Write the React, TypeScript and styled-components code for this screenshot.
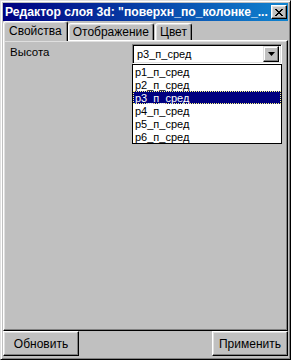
import React from 'react';
import styled, { createGlobalStyle } from 'styled-components';

const Global = createGlobalStyle`
  html, body { margin: 0; padding: 0; background: #c0c0c0; }
  body { font-family: "Liberation Sans", Arial, sans-serif; font-size: 11px; color: #000; }
  #root { width: 291px; height: 360px; }
  * { box-sizing: border-box; }
`;

const Window = styled.div`
  width: 291px;
  height: 360px;
  background: #c0c0c0;
  border: 1px solid;
  border-color: #dfdfdf #000 #000 #dfdfdf;
  box-shadow: inset 1px 1px #fff, inset -1px -1px #808080;
  padding: 2px 2px 3px 2px;
  display: flex;
  flex-direction: column;
`;

const TitleBar = styled.div`
  height: 18px;
  flex: none;
  background: linear-gradient(90deg, #000080, #1084d0);
  color: #fff;
  display: flex;
  align-items: center;
  justify-content: space-between;
  padding: 0 1px 0 2px;
  font-weight: bold;
  font-size: 12.2px;
  white-space: nowrap;
`;

const TitleText = styled.span`
  overflow: hidden;
`;

const CloseButton = styled.div`
  width: 16px;
  height: 14px;
  flex: none;
  background: #c0c0c0;
  border: 1px solid;
  border-color: #fff #000 #000 #fff;
  box-shadow: inset -1px -1px #808080, inset 1px 1px #dfdfdf;
  display: flex;
  align-items: center;
  justify-content: center;
`;

const TabStrip = styled.div`
  height: 19px;
  flex: none;
  display: flex;
  align-items: flex-end;
  position: relative;
  z-index: 1;
`;

const Tab = styled.div<{ $active?: boolean }>`
  height: ${p => (p.$active ? 20 : 17)}px;
  padding: 0 ${p => (p.$active ? 5 : 4)}px;
  margin: 0 ${p => (p.$active ? 0 : 1)}px ${p => (p.$active ? -1 : 0)}px 0;
  border: 1px solid;
  border-bottom: none;
  border-color: #fff #000 transparent #fff;
  border-radius: 3px 3px 0 0;
  box-shadow: inset -1px 0 #808080, inset 1px 1px #dfdfdf;
  background: #c0c0c0;
  display: flex;
  align-items: center;
  padding-bottom: ${p => (p.$active ? 2 : 0)}px;
  position: relative;
  z-index: ${p => (p.$active ? 2 : 1)};
  font-size: 12px;
`;

const Panel = styled.div`
  flex: 1;
  border: 1px solid;
  border-color: #fff #000 #000 #fff;
  box-shadow: inset -1px -1px #808080, inset 1px 1px #dfdfdf;
  padding: 3px 5px 0 6px;
  display: flex;
  flex-direction: column;
`;

const FieldRow = styled.div`
  display: flex;
  justify-content: space-between;
  align-items: flex-start;
`;

const Label = styled.span`
  margin-top: 2px;
  font-size: 11.5px;
`;

const Combo = styled.div`
  position: relative;
  width: 150px;
  height: 20px;
  background: #fff;
  border: 1px solid;
  border-color: #808080 #fff #fff #808080;
  box-shadow: inset 1px 1px #000, inset -1px -1px #dfdfdf;
  display: flex;
  align-items: center;
  justify-content: space-between;
  padding: 0 2px 0 4px;
`;

const ComboValue = styled.span`
  font-size: 11px;
`;

const DropButton = styled.div`
  width: 16px;
  height: 16px;
  background: #c0c0c0;
  border: 1px solid;
  border-color: #dfdfdf #000 #000 #dfdfdf;
  box-shadow: inset -1px -1px #808080, inset 1px 1px #fff;
  display: flex;
  align-items: center;
  justify-content: center;
`;

const DropList = styled.div`
  position: absolute;
  top: 19px;
  left: -1px;
  width: 150px;
  background: #fff;
  border: 1px solid #000;
  z-index: 5;
`;

const Item = styled.div<{ $selected?: boolean }>`
  height: 13px;
  line-height: 12px;
  padding-left: 1px;
  font-size: 11px;
  color: ${p => (p.$selected ? '#fff' : '#000')};
  background: ${p => (p.$selected ? '#000080' : '#fff')};
  border: 1px dotted ${p => (p.$selected ? '#ffff80' : 'transparent')};
`;

const ButtonRow = styled.div`
  height: 25px;
  flex: none;
  display: flex;
  justify-content: space-between;
`;

const Button = styled.div`
  width: 76px;
  height: 25px;
  background: #c0c0c0;
  border: 1px solid;
  border-color: #fff #000 #000 #fff;
  box-shadow: inset -1px -1px #808080, inset 1px 1px #dfdfdf;
  display: flex;
  align-items: center;
  justify-content: center;
  font-size: 12px;
`;

const items = ['p1_п_сред', 'p2_п_сред', 'p3_п_сред', 'p4_п_сред', 'p5_п_сред', 'p6_п_сред'];

export default function App() {
  return (
    <>
      <Global />
      <Window>
        <TitleBar>
          <TitleText>Редактор слоя 3d: "поверхн_по_колонке_...</TitleText>
          <CloseButton>
            <svg width="8" height="7" viewBox="0 0 8 7">
              <path d="M0 0h2v1h1v1h2v-1h1v-1h2v1h-1v1h-1v1h-1v1h1v1h1v1h1v1h-2v-1h-1v-1h-2v1h-1v1h-2v-1h1v-1h1v-1h1v-1h-1v-1h-1v-1h-1z" fill="#000" />
            </svg>
          </CloseButton>
        </TitleBar>
        <TabStrip>
          <Tab $active>Свойства</Tab>
          <Tab>Отображение</Tab>
          <Tab>Цвет</Tab>
        </TabStrip>
        <Panel>
          <FieldRow>
            <Label>Высота</Label>
            <Combo>
              <ComboValue>p3_п_сред</ComboValue>
              <DropButton>
                <svg width="7" height="4" viewBox="0 0 7 4">
                  <path d="M0 0h7L3.5 4z" fill="#000" />
                </svg>
              </DropButton>
              <DropList>
                {items.map(it => (
                  <Item key={it} $selected={it === 'p3_п_сред'}>{it}</Item>
                ))}
              </DropList>
            </Combo>
          </FieldRow>
        </Panel>
        <ButtonRow>
          <Button>Обновить</Button>
          <Button>Применить</Button>
        </ButtonRow>
      </Window>
    </>
  );
}
